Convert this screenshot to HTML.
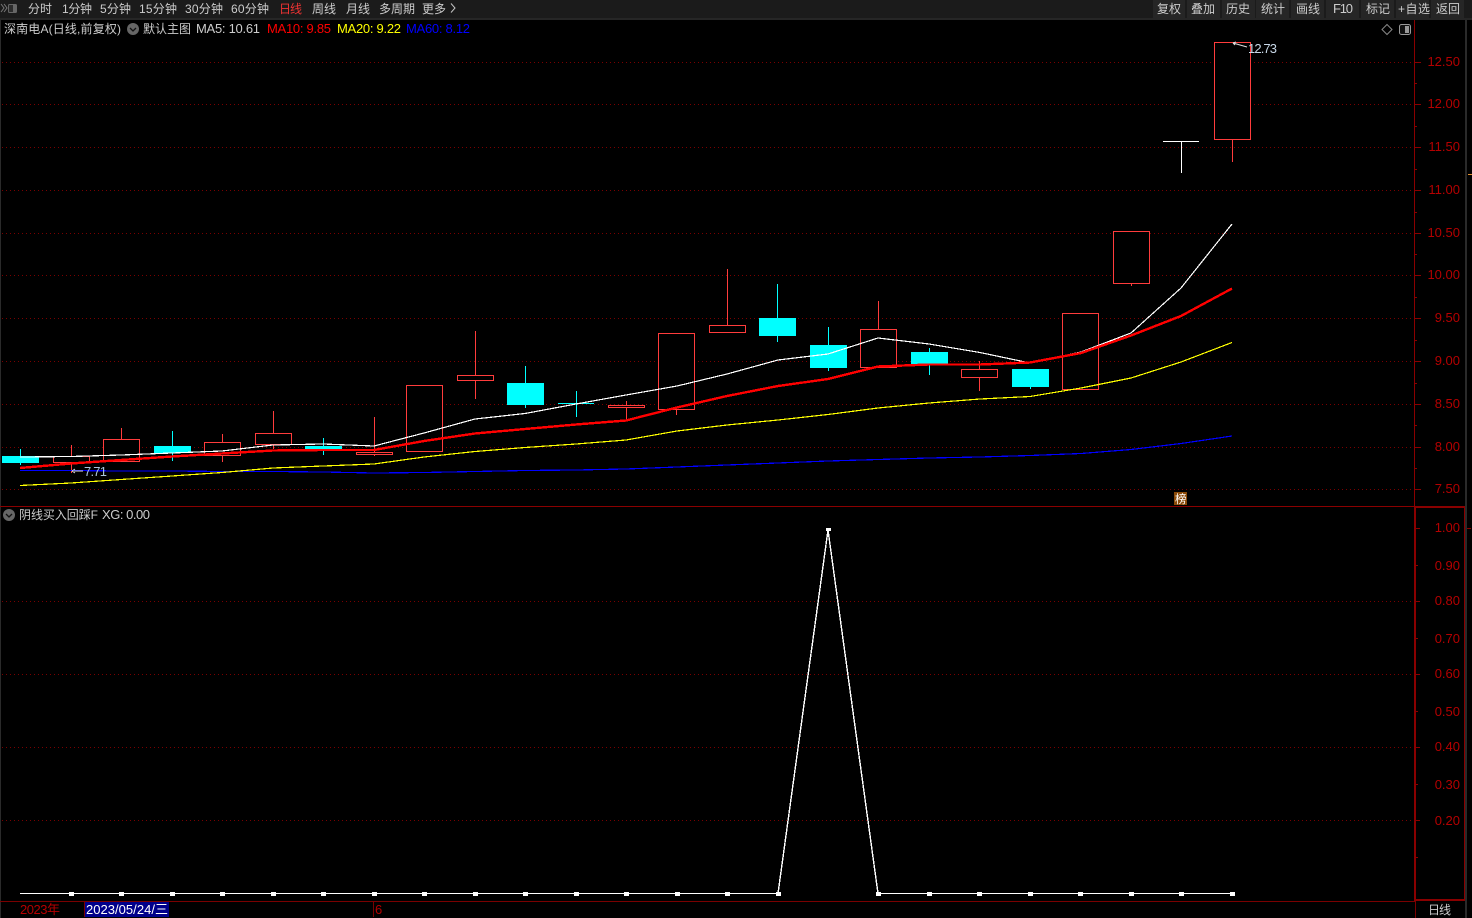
<!DOCTYPE html>
<html><head><meta charset="utf-8"><style>
html,body{margin:0;padding:0;background:#000;width:1472px;height:918px;overflow:hidden}
svg{display:block;font-family:"Liberation Sans","Noto Sans CJK SC",sans-serif;font-size:12px}
.g{stroke:#7a0000;stroke-width:1;stroke-dasharray:1 3;fill:none}
.c{fill:#000;stroke:#ff3c3c;stroke-width:1}
.w{stroke:#ff3c3c;stroke-width:1}
.b{stroke:#0ff;stroke-width:1}
.t{fill:#cccccc}
.a{fill:#b40000;font-size:13px}
.k{stroke:#8a0000;stroke-width:1}
.m{font-size:13px}
</style></head><body>
<svg width="1472" height="918" viewBox="0 0 1472 918" xmlns="http://www.w3.org/2000/svg">
<rect width="1472" height="918" fill="#000"/>
<rect width="1472" height="18" fill="#1b1b1b"/>
<rect y="18" width="1472" height="2" fill="#262626"/>
<g fill="#262626"><rect x="1153" width="32" height="18"/><rect x="1187" width="33" height="18"/><rect x="1222" width="33" height="18"/><rect x="1256" width="33" height="18"/><rect x="1291" width="33" height="18"/><rect x="1326" width="33" height="18"/><rect x="1361" width="33" height="18"/><rect x="1396" width="33" height="18"/><rect x="1431" width="33" height="18"/></g>
<path d="M1 4l3 4-3 4M4 4l3 4-3 4" fill="none" stroke="#777" stroke-width="1"/>
<rect x="8.5" y="4.5" width="8" height="8" rx="1" fill="#2c2c2c" stroke="#666"/><rect x="13" y="5" width="3" height="7" fill="#666"/>
<g class="t">
<text x="28" y="13" textLength="24">分时</text><text x="62" y="13" textLength="30">1分钟</text><text x="100" y="13" textLength="31">5分钟</text><text x="139" y="13" textLength="38">15分钟</text><text x="185" y="13" textLength="38">30分钟</text><text x="231" y="13" textLength="38">60分钟</text>
<text x="279" y="13" textLength="23" fill="#ee3333">日线</text>
<text x="312" y="13" textLength="24">周线</text><text x="346" y="13" textLength="24">月线</text><text x="379" y="13" textLength="36">多周期</text><text x="422" y="13" textLength="24">更多</text>
<path d="M451 3.5l4 4.5-4 4.5" fill="none" stroke="#c4c4c4"/>
<text x="1157" y="13" textLength="24">复权</text><text x="1191" y="13" textLength="24">叠加</text><text x="1226" y="13" textLength="24">历史</text><text x="1261" y="13" textLength="24">统计</text><text x="1296" y="13" textLength="24">画线</text><text x="1333" y="13" textLength="20" class="m">F10</text><text x="1366" y="13" textLength="24">标记</text><text x="1398" y="13" textLength="32">+自选</text><text x="1436" y="13" textLength="24">返回</text>
<text x="4" y="33" textLength="117">深南电A(日线,前复权)</text>
<text x="143" y="33" textLength="48">默认主图</text>
<text x="196" y="33" textLength="64" class="m">MA5: 10.61</text>
<text x="19" y="519" textLength="79">阴线买入回踩F</text>
<text x="102" y="519" textLength="48" class="m">XG: 0.00</text>
<text x="1428" y="914" textLength="23">日线</text>
</g>
<text x="267" y="33" textLength="64" fill="#f00" class="m">MA10: 9.85</text>
<text x="337" y="33" textLength="64" fill="#ff0" class="m">MA20: 9.22</text>
<text x="406" y="33" textLength="64" fill="#00f" class="m">MA60: 8.12</text>
<circle cx="133" cy="29" r="6" fill="#666"/><path d="M130 28l3 3 3-3" fill="none" stroke="#111" stroke-width="1.3"/>
<circle cx="9" cy="515" r="6" fill="#666"/><path d="M6 514l3 3 3-3" fill="none" stroke="#111" stroke-width="1.3"/>
<path d="M1387 24.5l5 5-5 5-5-5z" fill="none" stroke="#888"/>
<rect x="1399.5" y="24.5" width="11" height="10" rx="2" fill="#111" stroke="#999"/><rect x="1405" y="26" width="4" height="7" fill="#999"/>

<g shape-rendering="crispEdges">
<rect x="0" y="20" width="1" height="898" fill="#2a2a2a"/>
<rect x="1465" y="20" width="2" height="898" fill="#2a2a2a"/>
<g class="g">
<path d="M2 62.5H1414M2 104.5H1414M2 147.5H1414M2 190.5H1414M2 233.5H1414M2 275.5H1414M2 318.5H1414M2 361.5H1414M2 404.5H1414M2 447.5H1414M2 489.5H1414"/>
<path d="M2 601.5H1414M2 674.5H1414M2 747.5H1414M2 820.5H1414"/>
</g>
<!-- candle wicks -->
<g class="b">
<path d="M20.5 449V465M172.5 431V461M323.5 438V455M525.5 366V408M576.5 391V417M558 403.5H594M777.5 284V342M828.5 327V371M929.5 348V375M1030.5 369V389"/>
</g>
<g class="w">
<path d="M71.5 445V473M121.5 428V440M222.5 434V462M273.5 411V449M374.5 417V456M475.5 331V399M626.5 401V421M676.5 409V415M727.5 269V326M878.5 301V330M979.5 361V391M1131.5 283V286M1232.5 139V162"/>
</g>
<g fill="#0ff">
<rect x="2" y="456" width="37" height="7"/><rect x="154" y="446" width="37" height="7"/><rect x="305" y="446" width="37" height="3"/><rect x="507" y="383" width="37" height="22"/><rect x="759" y="318" width="37" height="18"/><rect x="810" y="345" width="37" height="23"/><rect x="911" y="352" width="37" height="12"/><rect x="1012" y="369" width="37" height="18"/>
</g>
<g class="c">
<rect x="53.5" y="456.5" width="36" height="6"/><rect x="103.5" y="439.5" width="36" height="22"/><rect x="204.5" y="442.5" width="36" height="13"/><rect x="255.5" y="433.5" width="36" height="11"/><rect x="356.5" y="452.5" width="36" height="2"/><rect x="406.5" y="385.5" width="36" height="66"/><rect x="457.5" y="375.5" width="36" height="5"/><rect x="608.5" y="405.5" width="36" height="2"/><rect x="658.5" y="333.5" width="36" height="76"/><rect x="709.5" y="325.5" width="36" height="7"/><rect x="860.5" y="329.5" width="36" height="38"/><rect x="961.5" y="369.5" width="36" height="8"/><rect x="1062.5" y="313.5" width="36" height="76"/><rect x="1113.5" y="231.5" width="36" height="52"/><rect x="1214.5" y="42.5" width="36" height="97"/>
</g>
<path d="M1163 141.5H1199M1181.5 141V173" stroke="#fff" fill="none"/>
<!-- MA lines -->
<polyline fill="none" stroke="#00f" stroke-width="1.2" points="20,470.5 71,470.5 121,471 172,471 222,471.5 273,471.5 323,472 374,473 424,472.5 475,471.5 525,470.5 576,470 626,469 677,467 727,465 778,463 828,461 878,459.5 929,458 980,457 1030,455.5 1081,453.5 1131,449.5 1181,443.5 1232,436"/>
<polyline fill="none" stroke="#ff0" stroke-width="1.2" points="20,485.5 71,483 121,479.5 172,476 222,472.5 273,468 323,466 374,464 424,457 475,451.5 525,447.5 576,444 626,440 677,431 727,425 778,420 828,414.5 878,408 929,403 980,399 1030,396.5 1081,388 1131,378 1181,362 1232,342.5"/>
<polyline fill="none" stroke="#fff" stroke-width="1.2" points="20,457 71,456.5 121,455 172,453 222,451 273,445 323,444 374,446 424,433 475,419 525,413.5 576,404 626,395 677,386 727,374 778,360 828,354 878,338 929,344 980,352.5 1030,363 1081,352 1131,333 1181,288 1232,224"/>
<polyline fill="none" stroke="#f00" stroke-width="2.4" points="20,468 71,463.5 121,460 172,456.5 222,453.5 273,450.5 323,450 374,450 424,441 475,433.5 525,429 576,424.5 626,420.5 677,407.5 727,396 778,386 828,379 878,366.5 929,364.5 980,364.5 1030,362.5 1081,353 1131,335.5 1181,316 1232,288.5"/>
<!-- lower series -->
<polyline fill="none" stroke="#fff" stroke-width="1.4" points="20,893.5 778,893.5 828,530 878,893.5 1232,893.5"/>
<g fill="#fff">
<rect x="69" y="892" width="5" height="4"/><rect x="119" y="892" width="5" height="4"/><rect x="170" y="892" width="5" height="4"/><rect x="220" y="892" width="5" height="4"/><rect x="271" y="892" width="5" height="4"/><rect x="321" y="892" width="5" height="4"/><rect x="372" y="892" width="5" height="4"/><rect x="422" y="892" width="5" height="4"/><rect x="473" y="892" width="5" height="4"/><rect x="523" y="892" width="5" height="4"/><rect x="574" y="892" width="5" height="4"/><rect x="624" y="892" width="5" height="4"/><rect x="675" y="892" width="5" height="4"/><rect x="725" y="892" width="5" height="4"/><rect x="776" y="892" width="5" height="4"/><rect x="826" y="528" width="5" height="3"/><rect x="876" y="892" width="5" height="4"/><rect x="927" y="892" width="5" height="4"/><rect x="977" y="892" width="5" height="4"/><rect x="1028" y="892" width="5" height="4"/><rect x="1078" y="892" width="5" height="4"/><rect x="1129" y="892" width="5" height="4"/><rect x="1179" y="892" width="5" height="4"/><rect x="1230" y="892" width="5" height="4"/>
</g>
<!-- frame -->
<rect x="1414" y="20" width="1" height="487" fill="#8a0000"/>
<rect x="0" y="506" width="1465" height="1" fill="#8a0000"/>
<rect x="1414" y="507" width="51" height="1" fill="#8a0000"/>
<rect x="1414" y="507" width="2" height="394" fill="#8a0000"/>
<rect x="1464" y="507" width="1" height="394" fill="#8a0000"/>
<rect x="1414" y="899" width="51" height="2" fill="#8a0000"/>
<rect x="0" y="901" width="1415" height="1" fill="#7a0000"/>
<rect x="1415" y="901" width="1" height="17" fill="#7a0000"/>
<rect x="84" y="902" width="1" height="15" fill="#7a0000"/>
<rect x="373" y="902" width="1" height="15" fill="#7a0000"/>
<rect x="85" y="902" width="84" height="15" fill="#00008b"/>
<g class="k" fill="none">
<path d="M1415 62.5h6M1415 104.5h6M1415 147.5h6M1415 190.5h6M1415 233.5h6M1415 275.5h6M1415 318.5h6M1415 361.5h6M1415 404.5h6M1415 447.5h6M1415 489.5h6"/>
<path d="M1415 83.5h2M1415 126.5h2M1415 169.5h2M1415 212.5h2M1415 254.5h2M1415 297.5h2M1415 340.5h2M1415 383.5h2M1415 425.5h2M1415 468.5h2"/>
<path d="M1416 528.5h4M1416 601.5h4M1416 674.5h4M1416 747.5h4M1416 820.5h4M1416 565.5h2M1416 638.5h2M1416 711.5h2M1416 784.5h2M1416 857.5h2"/>
<path d="M1467 528.5h4"/>
</g>
<rect x="1468" y="174" width="4" height="1" fill="#e09030"/>
<rect x="1174" y="492" width="13" height="13" fill="#8a4a08"/>
</g>
<text x="1175" y="503" font-size="11.5" fill="#fff">榜</text>
<g class="a" text-anchor="end">
<text x="1460" y="66">12.50</text><text x="1460" y="108">12.00</text><text x="1460" y="151">11.50</text><text x="1460" y="194">11.00</text><text x="1460" y="237">10.50</text><text x="1460" y="279">10.00</text>
<text x="1460" y="322">9.50</text><text x="1460" y="365">9.00</text><text x="1460" y="408">8.50</text><text x="1460" y="451">8.00</text><text x="1460" y="493">7.50</text>
<text x="1460" y="532">1.00</text><text x="1460" y="570">0.90</text><text x="1460" y="605">0.80</text><text x="1460" y="643">0.70</text><text x="1460" y="678">0.60</text><text x="1460" y="716">0.50</text><text x="1460" y="751">0.40</text><text x="1460" y="789">0.30</text><text x="1460" y="825">0.20</text>
</g>
<text x="20" y="914" font-size="13" fill="#b40000" textLength="40">2023年</text>
<text x="375" y="914" font-size="13" fill="#b40000">6</text>
<text x="86" y="914" font-size="13" fill="#fff" textLength="82">2023/05/24/三</text>
<path d="M74 471h9M72 471l3-2M72 471l3 2" stroke="#ddd" fill="none"/>
<text x="84" y="476" font-size="13" fill="#aac4dc" textLength="23">7.71</text>
<path d="M1233 43l14 4M1233 43l3-1M1233 43l2 2" stroke="#ddd" fill="none"/>
<text x="1248" y="53" font-size="13" fill="#c8d8e8" textLength="29">12.73</text>
</svg>
</body></html>
